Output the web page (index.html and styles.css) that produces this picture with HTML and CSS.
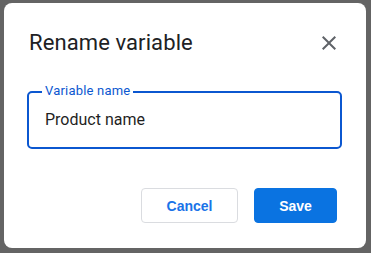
FILE: index.html
```html
<!DOCTYPE html>
<html>
<head>
<meta charset="utf-8">
<link rel="stylesheet" href="styles.css">
</head>
<body>
<div class="dialog">
  <div class="header">
    <h1 class="title">Rename variable</h1>
    <button class="close" aria-label="Close">
      <svg width="24" height="24" viewBox="0 0 24 24"><path fill="#5f6368" d="M19 6.41L17.59 5 12 10.59 6.41 5 5 6.41 10.59 12 5 17.59 6.41 19 12 13.41 17.59 19 19 17.59 13.41 12z"/></svg>
    </button>
  </div>
  <div class="field">
    <span class="field-label">Variable name</span>
    <div class="field-value">Product name</div>
  </div>
  <div class="actions">
    <button class="btn btn-cancel">Cancel</button>
    <button class="btn btn-save">Save</button>
  </div>
</div>
</body>
</html>
```
FILE: styles.css
```css
html, body { margin: 0; padding: 0; }
body {
  background: #646464;
  width: 371px;
  height: 253px;
  padding: 3px 0 0 4px;
  box-sizing: border-box;
  overflow: hidden;
  font-family: Roboto, "Noto Sans", sans-serif;
}
.dialog {
  width: 362px;
  height: 245px;
  background: #fff;
  border-radius: 8px;
  box-sizing: border-box;
  padding: 26px 24px 0 23px;
  display: flex;
  flex-direction: column;
}
.header {
  display: flex;
  align-items: center;
  justify-content: space-between;
  padding: 0 1px 0 2px;
  height: 28px;
}
.title {
  margin: 0;
  font-size: 22px;
  line-height: 28px;
  font-weight: 400;
  letter-spacing: 0.1px;
  color: #202124;
}
.close {
  border: 0;
  background: none;
  padding: 0;
  width: 24px;
  height: 24px;
  display: block;
}
.close svg { display: block; }
.field {
  position: relative;
  margin-top: 34px;
  border: 2px solid #0b57d0;
  border-radius: 5px;
  padding: 17px 16px;
}
.field-label {
  position: absolute;
  left: 13px;
  top: -10px;
  padding: 0 3px;
  background: #fff;
  color: #0b57d0;
  font-size: 13px;
  line-height: 16px;
  letter-spacing: 0.2px;
}
.field-value {
  font-size: 16px;
  line-height: 20px;
  color: #1f1f1f;
}
.actions {
  margin-top: 39px;
  display: flex;
  justify-content: flex-end;
  gap: 16px;
  padding-right: 5px;
}
.btn {
  height: 35px;
  border-radius: 4px;
  font-family: "Liberation Sans", Arial, sans-serif;
  font-weight: 700;
  font-size: 14px;
  box-sizing: border-box;
  padding: 0;
}
.btn-cancel {
  width: 97px;
  background: #fff;
  color: #1a73e8;
  border: 1px solid #dadce0;
}
.btn-save {
  width: 83px;
  background: #0a73e1;
  color: #fff;
  border: 1px solid #0a73e1;
}
```
